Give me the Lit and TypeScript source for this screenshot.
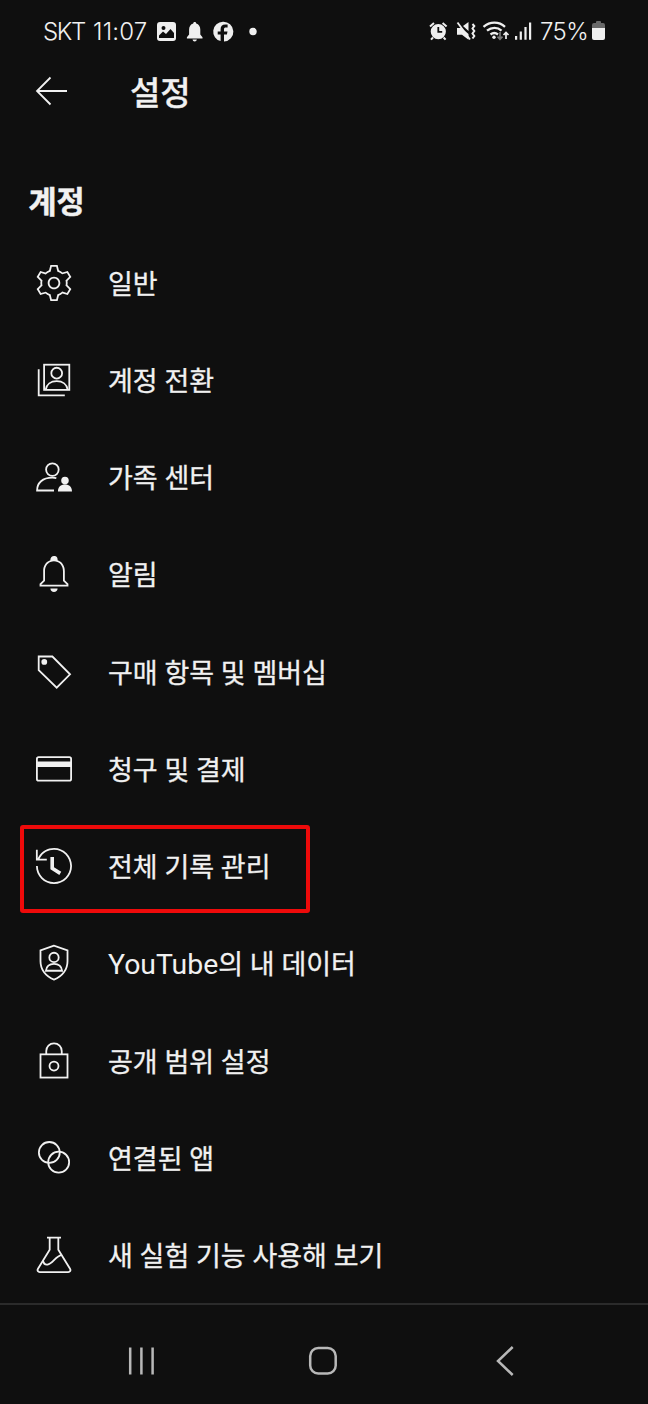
import { LitElement, html, css, svg } from "lit";
import { customElement, property } from "lit/decorators.js";

const icons: Record<string, unknown> = {
  gear: svg`<path class="f" d="M12 9.5c1.38 0 2.5 1.12 2.5 2.5s-1.12 2.5-2.5 2.5-2.5-1.12-2.5-2.5 1.12-2.5 2.5-2.5m0-1c-1.93 0-3.5 1.57-3.5 3.5s1.57 3.5 3.5 3.5 3.5-1.57 3.5-3.5-1.57-3.5-3.5-3.5zM13.22 3l.55 2.2.13.51.5.18c.61.23 1.19.56 1.72.98l.4.32.5-.14 2.17-.62 1.22 2.11-1.63 1.59-.37.36.08.51c.05.32.08.64.08.98s-.03.66-.08.98l-.08.51.37.36 1.63 1.59-1.22 2.11-2.17-.62-.5-.14-.4.32c-.53.43-1.11.76-1.72.98l-.5.18-.13.51-.55 2.24h-2.44l-.55-2.2-.13-.51-.5-.18c-.6-.23-1.18-.56-1.72-.99l-.4-.32-.5.14-2.17.62-1.21-2.12 1.63-1.59.37-.36-.08-.51c-.05-.32-.08-.65-.08-.98s.03-.66.08-.98l.08-.51-.37-.36L3.6 8.56l1.22-2.11 2.17.62.5.14.4-.32c.53-.44 1.11-.77 1.72-.99l.5-.18.13-.51.54-2.21h2.44M14 2h-4l-.74 2.96c-.73.27-1.4.66-2 1.14l-2.92-.83-2 3.46 2.19 2.13c-.06.37-.09.75-.09 1.14s.03.77.09 1.14l-2.19 2.13 2 3.46 2.92-.83c.6.48 1.27.87 2 1.14L10 22h4l.74-2.96c.73-.27 1.4-.66 2-1.14l2.92.83 2-3.46-2.19-2.13c.06-.37.09-.75.09-1.14s-.03-.77-.09-1.14l2.19-2.13-2-3.46-2.92.83c-.6-.48-1.27-.87-2-1.14L14 2z"/>`,
  switch: svg`<rect x="6.5" y="3.5" width="14" height="14"/><path d="M3.5 6v14.5H18"/><circle cx="13.5" cy="8.2" r="3"/><path d="M7.4 17.4c.4-3 2.9-4.8 6.1-4.8s5.700 1.800 6.100 4.800"/>`,
  family: svg`<circle cx="11.1" cy="7.9" r="3.5"/><path d="M12 19.500H2.600c0-4.200 3-7.100 8.500-7.100.8 0 1.500.05 2.200.2"/><path class="f" d="M18.100 11.800a2.100 2.100 0 1 1 0 4.200 2.100 2.100 0 0 1 0-4.200zM14.200 20c0-2.300 1.500-3.800 3.900-3.800s3.900 1.500 3.900 3.800z"/>`,
  bell: svg`<path class="f" d="M10 20h4c0 1.100-.9 2-2 2s-2-.9-2-2zm10-2.650V19H4v-1.650l2-1.880v-5.150C6 7.400 7.560 5.100 10 4.340v-.38c0-1.420 1.490-2.500 2.990-1.760.65.32 1.010 1.030 1.010 1.760v.39c2.440.75 4 3.060 4 5.980v5.150l2 1.870zm-1 .42-2-1.880v-5.470c0-2.470-1.190-4.360-3.130-5.100-1.260-.53-2.640-.5-3.840.03C8.150 6.110 7 7.990 7 10.420v5.470l-2 1.880V18h14v-.23z"/>`,
  tag: svg`<path d="M3.500 3.400h7.600l9.800 9.900-7.400 7.400L3.500 11z"/><circle class="f" cx="6.600" cy="6.400" r="1.600"/>`,
  card: svg`<rect x="2.500" y="5.400" width="19" height="13.100" rx="1"/><path class="f" d="M2 7.900h20v3H2z"/>`,
  history: svg`<path class="f" d="M14.970 16.950 10 13.870V7h2v5.760l4.030 2.490-1.060 1.700zM22 12c0 5.510-4.490 10-10 10S2 17.510 2 12h1c0 4.960 4.040 9 9 9s9-4.040 9-9-4.040-9-9-9C8.810 3 5.920 4.640 4.280 7.380c-.11.18-.22.37-.31.56L3.940 8H8v1H1.960V3h1v4.740c.04-.09.07-.17.11-.25.11-.22.23-.42.35-.63C5.220 3.860 8.510 2 12 2c5.510 0 10 4.490 10 10z"/>`,
  shield: svg`<path d="M12 2.400 4.500 5v6c0 4.600 2.800 8.500 7.500 10.200 4.700-1.700 7.500-5.600 7.500-10.200V5z"/><circle cx="12" cy="8.900" r="2.600"/><path d="M7.500 16.300c.3-2.400 2-3.800 4.500-3.800s4.200 1.400 4.500 3.800z"/>`,
  lock: svg`<rect x="4.500" y="8.300" width="15" height="12.900"/><path d="M7.700 8.300V6.500c0-2.500 1.800-4.300 4.300-4.300s4.300 1.800 4.300 4.300v1.800"/><circle cx="12" cy="14.800" r="2.500"/>`,
  rings: svg`<circle cx="9.400" cy="8.900" r="5.800"/><circle cx="14.600" cy="14.300" r="5.800"/>`,
  flask: svg`<path d="M8.100 2.400h7.800M9.600 2.400v6.700L3.100 19.600c-.6 1 0 1.900 1 1.900h15.800c1 0 1.600-.9 1-1.900L14.400 9.100V2.400"/><path d="M5.900 15.200c.3 1.500 1.200 2.300 2.500 2.100 3-.4 4.400-4.900 8.100-5.400"/>`,
};

@customElement("settings-row")
export class SettingsRow extends LitElement {
  @property() icon = "";
  @property() label = "";
  @property({ type: Boolean }) marked = false;
  static styles = css`
    :host { display: block; }
    .row { position: relative; display: flex; align-items: center; height: 97.25px; padding-left: 32px; }
    svg { width: 44px; height: 44px; flex: none; fill: none; stroke: #f1f1f1; stroke-width: 1; }
    .f { fill: #f1f1f1; stroke: none; }
    .label { margin-left: 32px; font: 400 27px/40px "Noto Sans CJK KR", sans-serif; word-spacing: 0.700px; color: #f1f1f1; white-space: nowrap; -webkit-text-stroke: 0.300px #f1f1f1; }
    .latin { font: 400 28.400px/1 Roboto, sans-serif; -webkit-text-stroke: 0; }
    .mark { position: absolute; left: 20px; top: 7px; width: 289.500px; height: 88.500px; box-sizing: border-box; border: 4px solid #ee0a0a; border-radius: 3px; }
  `;
  render() {
    const parts = this.label.split(/([A-Za-z]+)/).filter(Boolean);
    return html`<div class="row">
      <svg viewBox="-0.222 -0.222 24.444 24.444">${icons[this.icon]}</svg>
      <span class="label">${parts.map((p) => (/^[A-Za-z]/.test(p) ? html`<span class="latin">${p}</span>` : p))}</span>
      ${this.marked ? html`<div class="mark"></div>` : ""}
    </div>`;
  }
}

@customElement("app-root")
export class AppRoot extends LitElement {
  static styles = css`
    :host { display: block; font-family: "Noto Sans CJK KR", sans-serif; color: #f1f1f1; }
    .screen { display: flex; flex-direction: column; width: 648px; height: 1404px; overflow: hidden; background: #0f0f0f; }
    .status { display: flex; align-items: center; height: 62px; padding-left: 43px; box-sizing: border-box; flex: none; }
    .time, .pct { font: 350 24px/32px Inter, sans-serif; white-space: nowrap; color: #f1f1f1; padding-top: 2px; }
    .time { display: flex; gap: 8px; width: 112px; }
    .carrier { letter-spacing: -1.300px; }
    .clock { letter-spacing: 0.150px; }
    .pct { letter-spacing: -0.600px; width: 50px; }
    .status svg { flex: none; display: block; }
    .spacer { flex: 1; }
    .bar { display: flex; align-items: center; height: 60px; padding-left: 32px; flex: none; }
    .bar svg { margin-top: -2px; }
    .title { margin: -2px 0 0 60px; font: 500 33px/44px "Noto Sans CJK KR", sans-serif; -webkit-text-stroke: 0.300px #f1f1f1; }
    .section { margin: 0; padding: 56px 0 0 28.500px; height: 112.100px; box-sizing: border-box; font: 700 30.500px/44px "Noto Sans CJK KR", sans-serif; -webkit-text-stroke: 0.500px #f1f1f1; flex: none; }
    .list { flex: none; margin-bottom: -1px; }
    .nav { flex: 1; border-top: 2px solid #2b2b2b; display: flex; align-items: flex-start; padding: 38px 0 0 122px; box-sizing: border-box; gap: 141px; }
    .nav svg { width: 40px; height: 40px; fill: none; stroke: #b8b8b8; stroke-width: 2.500; }
  `;
  rows: [string, string][] = [
    ["gear", "일반"], ["switch", "계정 전환"], ["family", "가족 센터"], ["bell", "알림"],
    ["tag", "구매 항목 및 멤버십"], ["card", "청구 및 결제"], ["history", "전체 기록 관리"],
    ["shield", "YouTube의 내 데이터"], ["lock", "공개 범위 설정"], ["rings", "연결된 앱"],
    ["flask", "새 실험 기능 사용해 보기"],
  ];
  render() {
    return html`<div class="screen">
      <div class="status">
        <span class="time"><span class="carrier">SKT</span><span class="clock">11:07</span></span>
        <svg width="105" height="32" viewBox="155 15 105 32" fill="#efefef">
          <path fill-rule="evenodd" d="M160 22h13q3 0 3 3v13q0 3-3 3h-13q-3 0-3-3V25q0-3 3-3zM163.500 26a2 2 0 1 0 0 4 2 2 0 0 0 0-4zM159 38h15v-5l-3.500-4-4.500 5-3-2.500-4 4z"/>
          <path d="M194.700 22c-1 0-1.500.7-1.500 1.600-2.600.8-4.100 3-4.100 6v5l-2.200 2.600v1.300h15.600v-1.300l-2.200-2.600v-5c0-3-1.500-5.200-4.100-6 0-.9-.5-1.600-1.500-1.600zM192.500 39.500h4.400c-.3 1.300-1 2-2.200 2s-1.900-.7-2.200-2z"/>
          <path d="M222.900 21.800a9.800 9.800 0 0 0-2.300 19.300v-6.500h-2.900v-3.200h2.900v-2.200c0-3.300 1.500-4.800 4.700-4.800l2.300.2v3h-1.600c-1.500 0-2 .6-2 2v1.800h3.500l-.6 3.200H224v7a9.800 9.800 0 0 0-1.100-19.800z"/>
          <circle cx="253" cy="31.500" r="3.700"/>
        </svg>
        <span class="spacer"></span>
        <svg width="115" height="32" viewBox="425 15 115 32" fill="#efefef">
          <path fill-rule="evenodd" d="M438.300 24a7.600 7.600 0 1 0 0 15.200 7.600 7.600 0 0 0 0-15.200zM437.400 27h1.800v4h3v1.800h-4.800z"/>
          <path d="M430 26.500l4-3.500M446.600 26.500l-4-3.500M433 37.500l-2 2.200M443.600 37.500l2 2.200" stroke="#efefef" stroke-width="2"/>
          <path d="M457 28h4.500l7 6v5.800l-6.500-5h-5zM463 26l5.500-4v9z"/>
          <path d="M457.500 22.500 470 39.500" stroke="#efefef" stroke-width="1.800"/>
          <path d="m472.500 24 1.800 2-1.800 2.500 1.800 2.500-1.800 2.500 1.800 2.500-1.800 2.500" fill="none" stroke="#efefef" stroke-width="2"/>
          <g fill="none" stroke="#efefef" stroke-width="2.300"><path d="M483.500 26.800c6.500-5.500 15.500-5.500 21.500 0M487 30.700c4.500-3.700 10.500-3.700 14.500 0M490.500 34.500c2.500-2 5-2 7.500 0"/></g>
          <circle cx="494" cy="37.300" r="1.700"/>
          <path d="M500 32v7M497.500 36.700l2.500 2.500 2.500-2.500" fill="none" stroke="#777" stroke-width="1.700"/>
          <path d="M506 39v-6.500M503.500 35l2.500-2.500 2.500 2.500" fill="none" stroke="#efefef" stroke-width="1.700"/>
          <path d="M515 36h2.200v3.800H515zM519.700 31.500h2.200v8.300h-2.200zM524.400 27h2.200v12.800h-2.200zM529 22.500h2.200v17.300H529z"/>
        </svg>
        <span class="pct">75%</span>
        <svg width="58" height="32" viewBox="590 15 58 32"><path d="M592 28v-3q0-2 2-2h2v-1q0-1 1-1h3q1 0 1 1v1h2q2 0 2 2v3z" fill="#686868"/><path d="M592 28h13v10q0 2-2 2h-9q-2 0-2-2z" fill="#efefef"/></svg>
      </div>
      <div class="bar">
        <svg width="38" height="38" viewBox="32 72 38 38" fill="none" stroke="#f1f1f1" stroke-width="1.800"><path d="M50.500 77.500 37 91l13.500 13.500M37 91h30"/></svg>
        <h1 class="title">설정</h1>
      </div>
      <h2 class="section">계정</h2>
      <div class="list">${this.rows.map(([icon, label]) => html`<settings-row .icon=${icon} .label=${label} .marked=${icon === "history"}></settings-row>`)}</div>
      <div class="nav">
        <svg viewBox="0 0 40 40"><path d="M8.200 4.500v27M19.400 4.500v27M30.600 4.500v27"/></svg>
        <svg viewBox="0 0 40 40"><rect x="7.200" y="5" width="25.500" height="25.500" rx="8"/></svg>
        <svg viewBox="0 0 40 40"><path d="M28.700 4 14 18l14.700 14"/></svg>
      </div>
    </div>`;
  }
}
